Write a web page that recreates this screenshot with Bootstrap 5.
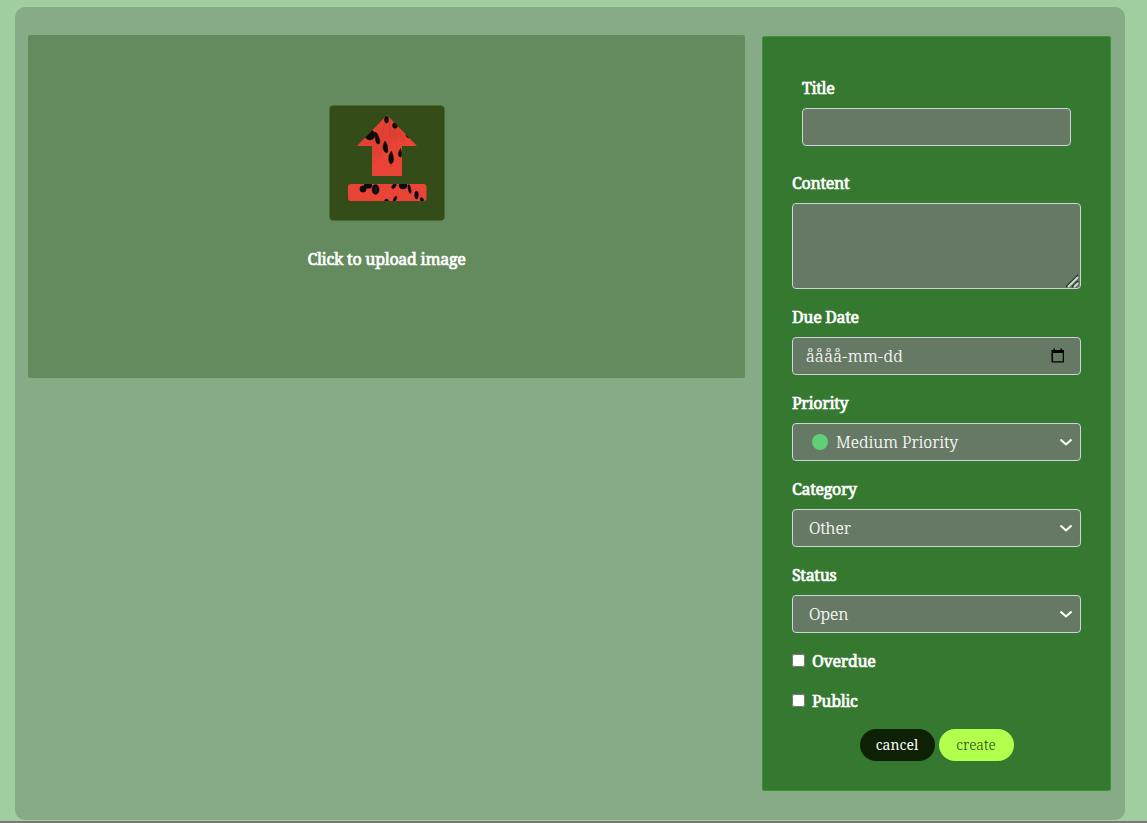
<!DOCTYPE html>
<html lang="en">
<head>
<meta charset="utf-8">
<meta name="viewport" content="width=device-width, initial-scale=1">
<title>Create task</title>
<link href="https://cdn.jsdelivr.net/npm/bootstrap@5.3.0/dist/css/bootstrap.min.css" rel="stylesheet">
<style>
body{background:#a1cea0;font-family:"Noto Serif","DejaVu Serif Condensed","DejaVu Serif",serif;font-stretch:condensed;color:#fff;height:823px;overflow:hidden;border-bottom:2px solid #7b7678}
.shell{margin:7px 22px 0 15px;height:813px;border-radius:10px;background:#87aa87;padding:28px 14px 0 13px;gap:17px}
.upload{width:717px;height:343px;background:#648b5e;border-radius:2px;padding-top:70px}
.panel{width:349px;height:755px;margin-top:1px;background:#357931;border:1px solid #3c9237;border-radius:2px;padding:29px}
.title-group{padding:10px;margin-bottom:15px}
.form-label,.form-check-text,.caption{font-weight:400;-webkit-text-stroke:.7px #fff;letter-spacing:-.33px;line-height:24px}
.caption{letter-spacing:-.27px;margin-top:26px}
.form-control,.form-control:focus,.form-select{background-color:#667964;border-color:#ced4da;border-radius:4px;color:#fff;font-size:16px;font-weight:300;-webkit-text-stroke:.15px #fff}
.form-control::placeholder{color:#fff;opacity:1}
.field-date{padding-left:13px;letter-spacing:.42px}
.form-select{display:flex;align-items:center;height:38px;padding:0 8px 0 16px;background-image:none}
.dot{width:16px;height:16px;border-radius:50%;background:#60d078;margin:0 8px 0 3px}
textarea.form-control{height:86px;resize:none}
.grip{right:1px;bottom:1px}
.tick{width:13px;height:13px;margin:0 7px 2px 0}
.pill{width:75px;height:32px;padding:0;border:0;border-radius:16px;font-size:14px;line-height:32px}
.pill-dark,.pill-dark:hover{background:#0e2104;color:#fff}
.pill-lime,.pill-lime:hover{background:#b2ff4d;color:#1e4518;font-weight:300}
.cal{right:15px;top:10px}
</style>
<script src="https://cdn.jsdelivr.net/npm/bootstrap@5.3.0/dist/js/bootstrap.bundle.min.js"></script>
</head>
<body>
<form class="shell d-flex align-items-start">
  <div class="upload d-flex flex-column align-items-center">
    <svg width="116" height="116" viewBox="0 0 116 116" role="img" aria-label="Upload">
      <defs>
        <linearGradient id="melon" x2="1" y2="1"><stop stop-color="#f04a3c"/><stop offset=".45" stop-color="#de4032"/><stop offset=".6" stop-color="#ea4437"/><stop offset="1" stop-color="#e94235"/></linearGradient>
        <clipPath id="arrow"><path d="M58 10 88 41H73V71H43V41H28Z"/></clipPath>
        <clipPath id="tray"><rect x="19" y="79" width="78.500" height="17" rx="3"/></clipPath>
      </defs>
      <rect x=".5" y=".5" width="115" height="115" rx="4" fill="#344d18"/>
      <g clip-path="url(#arrow)">
        <path d="M20 5H95V75H20Z" fill="url(#melon)"/>
        <path d="M56 17 53 29M60 18 62 34M65 22 68 33M70 27 76 38M53 42 50 52M63 56 62 63" stroke="#b93326" opacity=".35" fill="none"/>
        <g fill="#080b08" stroke="#080b08" stroke-width=".5">
          <ellipse cx="57.500" cy="14.500" rx="2" ry="3.500"/><ellipse cx="66" cy="20.500" rx="2.500" ry="2.800"/>
          <ellipse cx="41" cy="30" rx="5" ry="4.800" transform="rotate(-30 41 30)"/>
          <path d="M46 27Q48 27 50 33T49 39Q46 39 46 27M56 36Q59 39 58.800 46Q58.500 49 56 47Q52 43 56 36M62.500 46Q65 51 64.500 56Q61.500 62 60 56Q58.500 51 62.500 46M71.500 43.500Q73 47 72.500 51Q71 54 69.500 50Q69 47 71.500 43.500Z"/>
          <ellipse cx="79" cy="31" rx="2" ry="1.500" transform="rotate(45 79 31)"/>
        </g>
      </g>
      <g clip-path="url(#tray)">
        <path d="M19 79H98V97H19Z" fill="#ea4437"/>
        <g fill="#080b10" stroke="#080b10" stroke-width=".4">
          <ellipse cx="34" cy="84" rx="3.200" ry="3.200"/><ellipse cx="39" cy="80.500" rx="4" ry="3"/>
          <ellipse cx="46.500" cy="84.500" rx="3.500" ry="5"/><ellipse cx="65" cy="81" rx="1.700" ry="3" transform="rotate(38 65 81)"/>
          <ellipse cx="74" cy="80.500" rx="4" ry="3.500"/><ellipse cx="80.500" cy="84" rx="1.300" ry="4.500" transform="rotate(-12 80.500 84)"/>
          <ellipse cx="87.500" cy="90" rx="1.900" ry="4"/><ellipse cx="93" cy="95" rx="1.500" ry="2.500" transform="rotate(-25 93 95)"/>
          <ellipse cx="66" cy="94" rx="1.300" ry="3" transform="rotate(25 66 94)"/><ellipse cx="57.500" cy="96" rx="2" ry="2"/>
        </g>
        <path d="M47 82v5" stroke="#1c391b"/>
      </g>
    </svg>
    <div class="caption">Click to upload image</div>
  </div>
  <div class="panel">
    <div class="title-group"><label class="form-label d-block" for="title">Title</label><input class="form-control" id="title"></div>
    <div class="mb-3"><label class="form-label d-block" for="content">Content</label>
      <div class="position-relative"><textarea class="form-control d-block" id="content"></textarea>
        <svg class="grip position-absolute" width="14" height="14" viewBox="0 0 14 14" fill="none"><path d="M0 13 12 1M6 13 12 7" stroke="#252d24" stroke-width="1.500"/><path d="M2 13 12 3M8 13 12 9" stroke="#d0d6d0" stroke-width="2"/></svg></div></div>
    <div class="mb-3"><label class="form-label d-block" for="due">Due Date</label>
      <div class="position-relative"><input class="form-control field-date" id="due" placeholder="åååå-mm-dd">
        <svg class="cal position-absolute" width="16" height="17" viewBox="0 0 16 17"><path d="M1.500 3H3.500V1.500H5V3H10.500V1.500H12V3H14V15.500H1.500ZM3 6V14.300H12.800V6Z" fill="#000" fill-rule="evenodd"/></svg></div></div>
    <div class="mb-3"><div class="form-label">Priority</div><div class="form-select"><span class="dot"></span><span>Medium Priority</span><svg class="ms-auto" width="12" height="8" viewBox="0 0 12 8"><path d="m.5 1.500 5.500 5 5.500-5" fill="none" stroke="#fff" stroke-width="2"/></svg></div></div>
    <div class="mb-3"><div class="form-label">Category</div><div class="form-select"><span>Other</span><svg class="ms-auto" width="12" height="8" viewBox="0 0 12 8"><path d="m.5 1.500 5.500 5 5.500-5" fill="none" stroke="#fff" stroke-width="2"/></svg></div></div>
    <div class="mb-3"><div class="form-label">Status</div><div class="form-select"><span>Open</span><svg class="ms-auto" width="12" height="8" viewBox="0 0 12 8"><path d="m.5 1.500 5.500 5 5.500-5" fill="none" stroke="#fff" stroke-width="2"/></svg></div></div>
    <label class="d-flex align-items-center mb-3"><input class="tick" type="checkbox"><span class="form-check-text">Overdue</span></label>
    <label class="d-flex align-items-center mb-3"><input class="tick" type="checkbox"><span class="form-check-text">Public</span></label>
    <div class="d-flex justify-content-center gap-1"><button class="btn pill pill-dark" type="button">cancel</button><button class="btn pill pill-lime" type="button">create</button></div>
  </div>
</form>
</body>
</html>
